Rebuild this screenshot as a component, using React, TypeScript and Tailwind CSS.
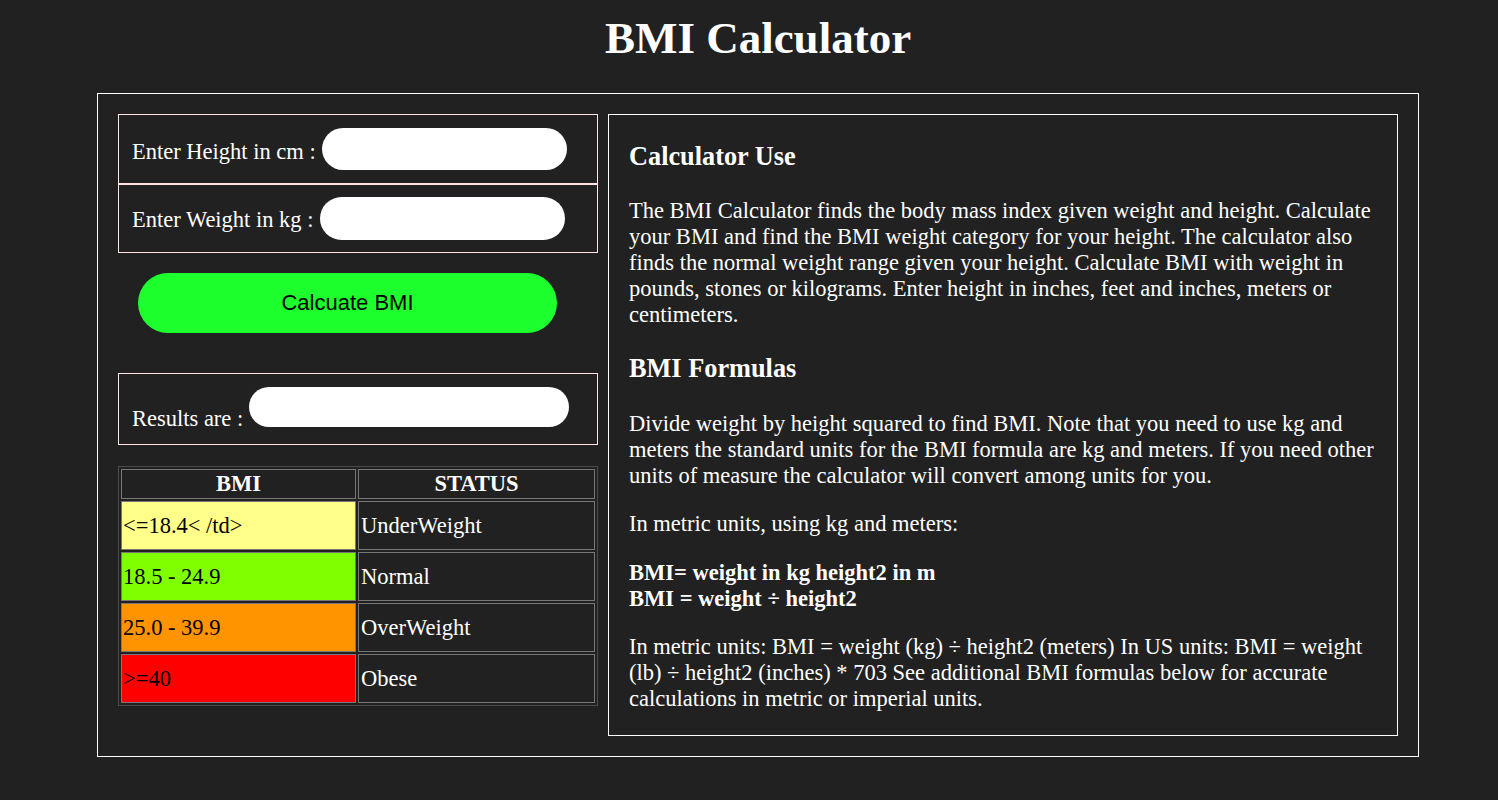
import React from "react";

const serif = { fontFamily: '"Liberation Serif", "Times New Roman", serif' };

export default function App() {
  const rows = [
    { bmi: "<=18.4< /td>", status: "UnderWeight", bg: "bg-[#ffff8a]" },
    { bmi: "18.5 - 24.9", status: "Normal", bg: "bg-[#80ff00]" },
    { bmi: "25.0 - 39.9", status: "OverWeight", bg: "bg-[#ff9400]" },
    { bmi: ">=40", status: "Obese", bg: "bg-[#ff0000]" },
  ];
  return (
    <div className="min-h-[800px] w-full bg-[#212121] text-white text-[22.5px] leading-[26px]" style={serif}>
      <div className="ml-[97px] w-[1322px]">
        <h1 className="pt-[12px] text-center text-[45px] leading-[52px] font-bold">BMI Calculator</h1>
        <div className="mt-[29px] border border-white p-[20px] flex gap-[10px] items-start">
          {/* Left column */}
          <div className="w-[480px] flex flex-col shrink-0">
            <div className="h-[70px] border border-[#ffe4e1] flex items-center px-[13px]">
              <span className="mr-[6px] mt-[5px] whitespace-nowrap">Enter Height in cm :</span>
              <div className="w-[245px] h-[42px] rounded-full bg-white shrink-0" />
            </div>
            <div className="h-[69px] border border-[#ffe4e1] flex items-center px-[13px]">
              <span className="mr-[6px] mt-[3px] whitespace-nowrap">Enter Weight in kg :</span>
              <div className="w-[245px] h-[43px] rounded-full bg-white shrink-0" />
            </div>
            <button
              className="mt-[20px] ml-[20px] w-[419px] h-[60px] rounded-full bg-[#1eff2e] text-black text-[22px]"
              style={{ fontFamily: '"Liberation Sans", Arial, sans-serif' }}
            >
              Calcuate BMI
            </button>
            <div className="mt-[40px] h-[72px] border border-[#ffe4e1] flex items-start pt-[13px] px-[13px]">
              <span className="mr-[6px] mt-[19px] whitespace-nowrap">Results are :</span>
              <div className="w-[320px] h-[40px] rounded-full bg-white shrink-0" />
            </div>
            <table className="mt-[21px] w-[480px] border border-[#4a4a4a] border-separate border-spacing-[2px] table-fixed">
              <colgroup>
                <col className="w-[235px]" />
                <col />
              </colgroup>
              <thead>
                <tr>
                  <th className="h-[30px] border border-[#777] font-bold text-center p-0 leading-[26px]">BMI</th>
                  <th className="h-[30px] border border-[#777] font-bold text-center p-0 leading-[26px]">STATUS</th>
                </tr>
              </thead>
              <tbody>
                {rows.map((r) => (
                  <tr key={r.status}>
                    <td className={`h-[49px] border border-[#777] ${r.bg} text-black px-[1px] py-0`}>{r.bmi}</td>
                    <td className="h-[49px] border border-[#777] px-[2px] py-0">{r.status}</td>
                  </tr>
                ))}
              </tbody>
            </table>
          </div>
          {/* Right column */}
          <div className="flex-1 border border-white pt-[27px] px-[20px] pb-[23px]">
            <h3 className="text-[26.3px] leading-[30px] font-bold">Calculator Use</h3>
            <p className="mt-[26px]">
              The BMI Calculator finds the body mass index given weight and height. Calculate your BMI and find the BMI weight category for your height. The calculator also finds the normal weight range given your height. Calculate BMI with weight in pounds, stones or kilograms. Enter height in inches, feet and inches, meters or centimeters.
            </p>
            <h3 className="mt-[26px] text-[26.3px] leading-[30px] font-bold">BMI Formulas</h3>
            <p className="mt-[27px]">
              Divide weight by height squared to find BMI. Note that you need to use kg and meters the standard units for the BMI formula are kg and meters. If you need other units of measure the calculator will convert among units for you.
            </p>
            <p className="mt-[22px]">In metric units, using kg and meters:</p>
            <p className="mt-[23px] font-bold">
              BMI= weight in kg height2 in m
              <br />
              BMI = weight ÷ height2
            </p>
            <p className="mt-[22px]">
              In metric units: BMI = weight (kg) ÷ height2 (meters) In US units: BMI = weight (lb) ÷ height2 (inches) * 703 See additional BMI formulas below for accurate calculations in metric or imperial units.
            </p>
          </div>
        </div>
      </div>
    </div>
  );
}
